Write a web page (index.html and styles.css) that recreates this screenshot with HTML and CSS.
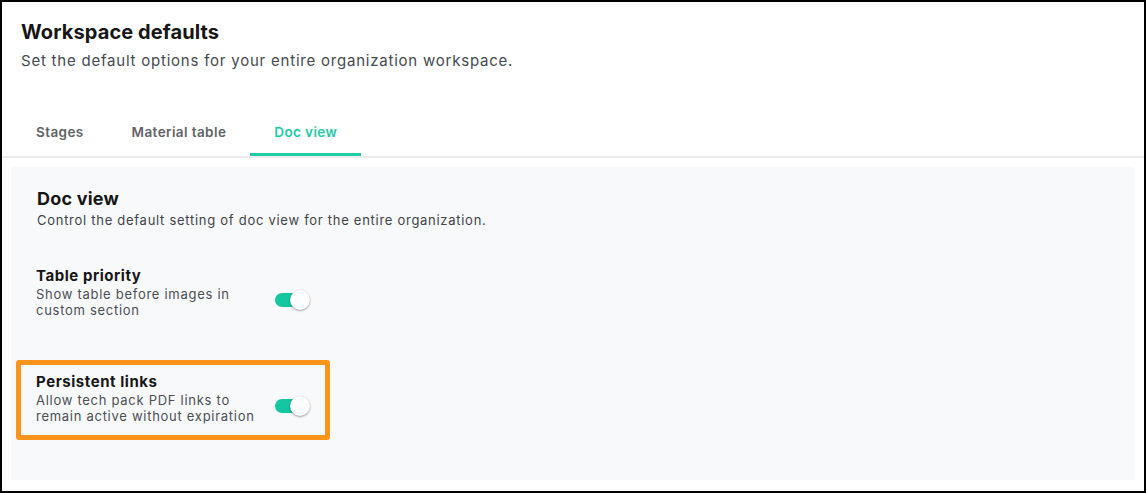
FILE: index.html
```html
<!DOCTYPE html>
<html lang="en">
<head>
<meta charset="utf-8">
<title>Workspace defaults</title>
<link rel="stylesheet" href="styles.css">
</head>
<body>
<div class="frame">
  <header class="header">
    <h1 class="title">Workspace defaults</h1>
    <p class="subtitle">Set the default options for your entire organization workspace.</p>
  </header>
  <nav class="tabs">
    <div class="tab">Stages</div>
    <div class="tab">Material table</div>
    <div class="tab active">Doc view</div>
  </nav>
  <section class="panel">
    <h2 class="panel-title">Doc view</h2>
    <p class="panel-desc">Control the default setting of doc view for the entire organization.</p>

    <div class="setting">
      <div class="setting-title">Table priority</div>
      <div class="setting-body">
        <div class="setting-desc">Show table before images in custom section</div>
        <div class="toggle on"><span class="track"></span><span class="knob"></span></div>
      </div>
    </div>

    <div class="setting highlighted">
      <div class="setting-title">Persistent links</div>
      <div class="setting-body">
        <div class="setting-desc">Allow tech pack PDF links to remain active without expiration</div>
        <div class="toggle on"><span class="track"></span><span class="knob"></span></div>
      </div>
    </div>
  </section>
</div>
</body>
</html>
```

FILE: styles.css
```css
* { box-sizing: border-box; }
html, body { margin: 0; padding: 0; background: #fff; }
body { font-family: Inter, "Noto Sans", "DejaVu Sans", sans-serif; color: #1b1b1b; }

.frame {
  width: 1146px;
  height: 493px;
  border: 2px solid #000;
  background: #fff;
  display: flex;
  flex-direction: column;
}

.header { padding: 18px 19px 0; }
.title {
  margin: 0;
  font-size: 20px;
  line-height: 24px;
  font-weight: 700;
  color: #161616;
  letter-spacing: 0.1px;
}
.subtitle {
  margin: 6px 0 0;
  font-size: 15px;
  line-height: 22px;
  color: #444a4f;
  letter-spacing: 0.78px;
}

.tabs {
  margin-top: 36px;
  display: flex;
  padding-left: 10px;
  border-bottom: 2px solid #ececec;
}
.tab {
  padding: 3px 24px 0;
  height: 48px;
  display: flex;
  align-items: center;
  font-size: 13.5px;
  font-weight: 600;
  color: #5f6368;
  border-bottom: 3px solid transparent;
  letter-spacing: 0.4px;
}
.tab.active {
  color: #1ec9a4;
  border-bottom-color: #22cba7;
}

.panel {
  margin: 9px 10px 0 9px;
  height: 313px;
  background: #f8f9fb;
  padding: 20px 25px 0;
}
.panel-title {
  margin: 0;
  font-size: 18px;
  line-height: 24px;
  font-weight: 700;
  color: #161616;
  padding-left: 1px;
  letter-spacing: 0.2px;
}
.panel-desc {
  margin: 0;
  font-size: 13px;
  line-height: 18px;
  color: #3f4448;
  padding-left: 1px;
  letter-spacing: 0.72px;
}

.setting { margin-top: 37px; width: 274px; }
.setting-title {
  font-size: 15px;
  line-height: 20px;
  font-weight: 700;
  color: #161616;
  letter-spacing: 0.55px;
}
.setting-body {
  display: flex;
  align-items: center;
  gap: 9px;
}
.setting-desc {
  width: 230px;
  font-size: 13px;
  line-height: 16px;
  color: #4a4f54;
  letter-spacing: 0.72px;
}

.setting.highlighted {
  margin-top: 42px;
  margin-left: -20px;
  width: 314px;
  border: 5px solid #fb941b;
  border-radius: 3px;
  padding: 7px 15px 11px;
}

.toggle {
  position: relative;
  width: 35px;
  height: 20px;
  flex: none;
  margin-top: -4px;
}
.toggle .track {
  position: absolute;
  left: 0;
  top: 3px;
  width: 30px;
  height: 14px;
  border-radius: 7px;
  background: #13c7a0;
}
.toggle .knob {
  position: absolute;
  right: 0;
  top: 0;
  width: 20px;
  height: 20px;
  border-radius: 50%;
  background: #fff;
  box-shadow: 0 1px 2px rgba(0,0,0,0.35), 0 0 1px rgba(0,0,0,0.15);
}
```
